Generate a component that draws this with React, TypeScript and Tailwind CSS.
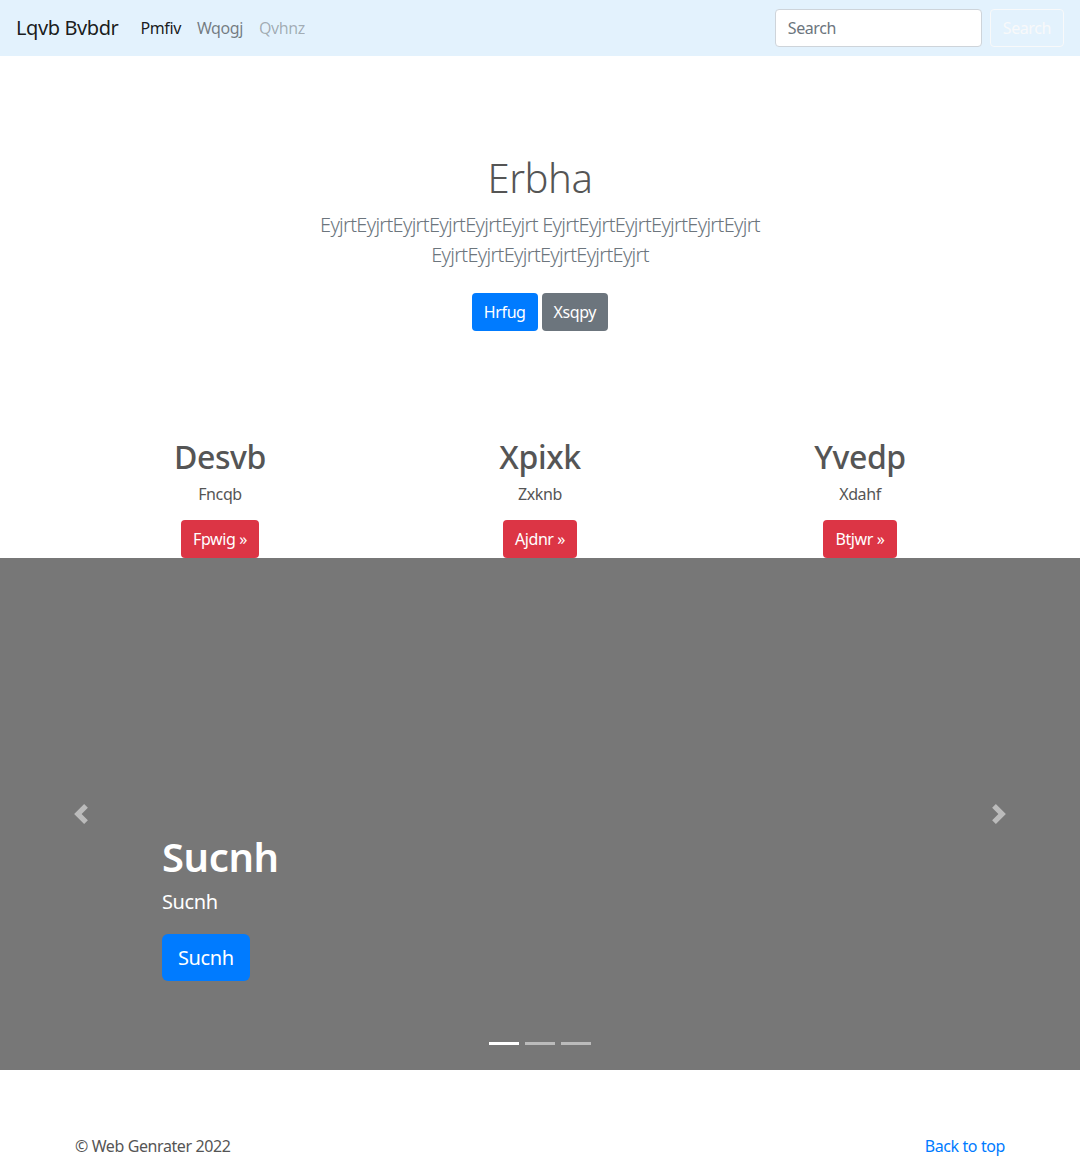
import React from "react";

const font = { fontFamily: '"Noto Sans", "Open Sans", Arial, sans-serif' };

export default function App() {
  return (
    <div className="min-h-[1158px] bg-white text-[#555] tracking-[-0.025em]" style={font}>
      {/* Navbar */}
      <nav className="h-[56px] bg-[#e3f2fd] flex items-center px-4">
        <span className="text-[20px] text-[rgba(0,0,0,0.9)] mr-[14px] leading-[30px]">Lqvb Bvbdr</span>
        <div className="flex items-center text-[16px]">
          <span className="px-2 text-[rgba(0,0,0,0.9)]">Pmfiv</span>
          <span className="px-2 text-[rgba(0,0,0,0.5)]">Wqogj</span>
          <span className="px-2 text-[rgba(0,0,0,0.3)]">Qvhnz</span>
        </div>
        <div className="ml-auto flex items-center gap-2">
          <input
            placeholder="Search"
            className="w-[207px] h-[38px] rounded border border-[#ced4da] bg-white px-3 text-[16px] placeholder:text-[#6c757d] outline-none"
          />
          <button className="h-[38px] px-3 rounded border border-[#f8f9fa] text-[#f8f9fa] text-[16px]">Search</button>
        </div>
      </nav>

      {/* Hero */}
      <section className="pt-[98px] text-center">
        <h1 className="text-[40px] font-light leading-[48px] text-[#555] mb-2">Erbha</h1>
        <p className="text-[20px] font-light leading-[30px] text-[#6c757d] max-w-[610px] mx-auto tracking-[-0.035em]">
          EyjrtEyjrtEyjrtEyjrtEyjrtEyjrt EyjrtEyjrtEyjrtEyjrtEyjrtEyjrt EyjrtEyjrtEyjrtEyjrtEyjrtEyjrt
        </p>
        <div className="mt-[23px] flex justify-center gap-1">
          <button className="h-[38px] px-3 rounded bg-[#007bff] text-white text-[16px]">Hrfug</button>
          <button className="h-[38px] px-3 rounded bg-[#6c757d] text-white text-[16px]">Xsqpy</button>
        </div>
      </section>

      {/* Columns */}
      <section className="mt-[108px] w-[960px] mx-auto grid grid-cols-3 text-center">
        {[
          ["Desvb", "Fncqb", "Fpwig"],
          ["Xpixk", "Zxknb", "Ajdnr"],
          ["Yvedp", "Xdahf", "Btjwr"],
        ].map(([h, p, b]) => (
          <div key={h} className="px-[15px] flex flex-col items-center">
            <h2 className="text-[32px] font-medium leading-[36px] text-[#555] mb-[7px]">{h}</h2>
            <p className="text-[16px] leading-[24px] text-[#555] mb-[14px]">{p}</p>
            <button className="h-[38px] px-3 rounded bg-[#dc3545] text-white text-[16px]">{b} »</button>
          </div>
        ))}
      </section>

      {/* Carousel */}
      <section className="relative h-[512px] bg-[#777] flex flex-col justify-end pb-[89px] px-[162px]">
        <div className="text-white">
          <h1 className="text-[40px] font-semibold leading-[48px]">Sucnh</h1>
          <p className="text-[20px] leading-[30px] mt-[6px] mb-[17px]">Sucnh</p>
          <button className="h-[47px] px-4 rounded-md bg-[#007bff] text-white text-[20px]">Sucnh</button>
        </div>
        <div className="absolute left-0 top-0 bottom-0 w-[162px] flex items-center justify-center opacity-50">
          <svg width="20" height="20" viewBox="0 0 8 8" fill="#fff">
            <path d="M5.25 0l-4 4 4 4 1.5-1.5-2.5-2.5 2.5-2.5-1.5-1.5z" />
          </svg>
        </div>
        <div className="absolute right-0 top-0 bottom-0 w-[162px] flex items-center justify-center opacity-50">
          <svg width="20" height="20" viewBox="0 0 8 8" fill="#fff">
            <path d="M2.75 0l-1.5 1.5 2.5 2.5-2.5 2.5 1.5 1.5 4-4-4-4z" />
          </svg>
        </div>
        <div className="absolute left-0 right-0 bottom-[25px] flex justify-center gap-[6px]">
          <span className="w-[30px] h-[3px] bg-white" />
          <span className="w-[30px] h-[3px] bg-white opacity-50" />
          <span className="w-[30px] h-[3px] bg-white opacity-50" />
        </div>
      </section>

      {/* Footer */}
      <footer className="w-[960px] mx-auto px-[15px] pt-[64px] flex justify-between text-[16px] leading-[24px]">
        <p className="text-[#555]">© Web Genrater 2022</p>
        <a className="text-[#007bff]">Back to top</a>
      </footer>
    </div>
  );
}
